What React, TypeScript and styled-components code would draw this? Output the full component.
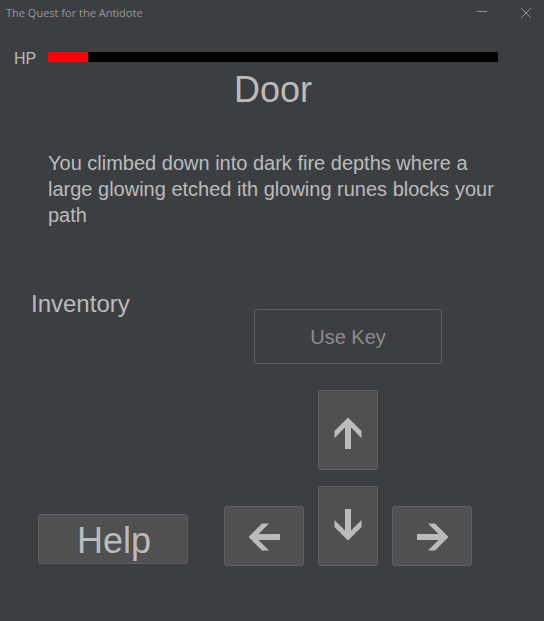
import React from "react";
import styled, { createGlobalStyle } from "styled-components";

const GlobalStyle = createGlobalStyle`
  * { box-sizing: border-box; }
  body {
    margin: 0;
    min-height: 100vh;
    background: #3c3f41;
    color: #bbbbbb;
    font-family: "Liberation Sans", Arial, sans-serif;
  }
`;

const Window = styled.div`
  display: flex;
  flex-direction: column;
`;

const TitleBar = styled.header`
  display: flex;
  align-items: center;
  height: 26px;
  padding-left: 6px;
  color: #969899;
  font: 11px/16px "Open Sans", "Noto Sans", sans-serif;
`;

const WindowTitle = styled.span`
  flex: 1;
`;

const WindowButton = styled.button`
  display: flex;
  align-items: center;
  justify-content: center;
  width: 44px;
  height: 24px;
  padding: 0 0 0 8px;
  border: 0;
  background: transparent;
  color: #919191;
`;

const HealthRow = styled.div`
  display: flex;
  align-items: center;
  gap: 12px;
  height: 18px;
  margin-top: 22px;
  padding: 0 46px 0 14px;
`;

const HealthLabel = styled.span`
  width: 22px;
  padding-top: 4px;
  font-size: 16px;
  line-height: 18px;
`;

const HealthTrack = styled.div`
  flex: 1;
  height: 10px;
  background: #000000;
`;

const HealthFill = styled.div`
  height: 100%;
  background: #ff0000;
`;

const RoomName = styled.h1`
  margin: 3px 0 0;
  padding-left: 2px;
  font-size: 36px;
  font-weight: 400;
  line-height: 42px;
  text-align: center;
`;

const Description = styled.p`
  min-height: 130px;
  margin: 39px 46px 0 48px;
  font-size: 20px;
  line-height: 26px;
`;

const Controls = styled.main`
  display: grid;
  grid-template-columns: 188px 1fr;
  gap: 36px;
  padding: 8px 72px 55px 0;
`;

const SideColumn = styled.section`
  display: flex;
  flex-direction: column;
  justify-content: space-between;
  padding: 2px 0 2px 31px;
`;

const InventoryHeading = styled.h2`
  margin: 0;
  font-size: 24px;
  font-weight: 400;
  line-height: 28px;
`;

const ActionColumn = styled.section`
  display: flex;
  flex-direction: column;
  align-items: center;
  gap: 26px;
  padding-top: 21px;
`;

const GameButton = styled.button`
  display: flex;
  align-items: center;
  justify-content: center;
  padding: 0;
  border: 1px solid #5e6060;
  border-radius: 3px;
  background: #4e5052;
  color: #bbbbbb;
  font-family: inherit;
`;

const HelpButton = styled(GameButton)`
  width: 150px;
  height: 50px;
  margin-left: 7px;
  padding: 4px 0 0 2px;
  font-size: 36px;
  line-height: 40px;
`;

const ActionButton = styled(GameButton)`
  width: 188px;
  height: 55px;
  font-size: 20px;
  line-height: 24px;

  &:disabled {
    background: transparent;
    color: #8c8c8c;
  }
`;

const DirectionPad = styled.div`
  display: grid;
  grid-template-areas: ". up ." "left down right";
  grid-template-columns: 80px 60px 80px;
  align-items: end;
  gap: 16px 14px;
`;

type Direction = "up" | "down" | "left" | "right";

const DirectionButton = styled(GameButton)<{ $area: Direction }>`
  grid-area: ${({ $area }) => $area};
  height: ${({ $area }) => ($area === "up" || $area === "down" ? 80 : 60)}px;
  padding-top: ${({ $area }) => ($area === "up" ? 8 : $area === "down" ? 0 : 2)}px;
  padding-bottom: ${({ $area }) => ($area === "down" ? 2 : 0)}px;
`;

const arrowPaths: Record<Direction, string> = {
  up: "M15.5 0H16.5L29.5 13V20L19 9.5V31H13V9.5L2.5 20V13Z",
  down: "M13 0H19V21.5L29.5 11V18L16.5 31H15.5L2.5 18V11L13 21.5Z",
  left: "M1 16.5V15.5L14 2.5H21L10.5 13H32V19H10.5L21 29.5H14Z",
  right: "M32 16.5V15.5L19 2.5H12L22.5 13H1V19H22.5L12 29.5H19Z",
};

function Arrow({ direction }: { direction: Direction }) {
  return (
    <svg width="32" height="32" viewBox="0 0 32 32" aria-hidden="true">
      <path d={arrowPaths[direction]} fill="currentColor" />
    </svg>
  );
}

const directions: { area: Direction; label: string }[] = [
  { area: "up", label: "Go up" },
  { area: "left", label: "Go left" },
  { area: "down", label: "Go down" },
  { area: "right", label: "Go right" },
];

export default function App() {
  const health = 8;
  const maxHealth = 90;
  return (
    <Window>
      <GlobalStyle />
      <TitleBar>
        <WindowTitle>The Quest for the Antidote</WindowTitle>
        <WindowButton type="button" aria-label="Minimize">
          <svg width="10" height="10" viewBox="0 0 10 10" aria-hidden="true">
            <path d="M0 3.5H10" stroke="currentColor" />
          </svg>
        </WindowButton>
        <WindowButton type="button" aria-label="Close">
          <svg width="10" height="10" viewBox="0 0 10 10" aria-hidden="true">
            <path d="M0 0L10 10M10 0L0 10" stroke="currentColor" />
          </svg>
        </WindowButton>
      </TitleBar>
      <HealthRow>
        <HealthLabel id="hp-label">HP</HealthLabel>
        <HealthTrack
          role="progressbar"
          aria-labelledby="hp-label"
          aria-valuemin={0}
          aria-valuemax={maxHealth}
          aria-valuenow={health}
        >
          <HealthFill style={{ width: `${(health / maxHealth) * 100}%` }} />
        </HealthTrack>
      </HealthRow>
      <RoomName>Door</RoomName>
      <Description>
        You climbed down into dark fire depths where a large glowing etched ith
        glowing runes blocks your path
      </Description>
      <Controls>
        <SideColumn>
          <InventoryHeading>Inventory</InventoryHeading>
          <HelpButton type="button">Help</HelpButton>
        </SideColumn>
        <ActionColumn>
          <ActionButton type="button" disabled>
            Use Key
          </ActionButton>
          <DirectionPad>
            {directions.map(({ area, label }) => (
              <DirectionButton key={area} type="button" $area={area} aria-label={label}>
                <Arrow direction={area} />
              </DirectionButton>
            ))}
          </DirectionPad>
        </ActionColumn>
      </Controls>
    </Window>
  );
}
